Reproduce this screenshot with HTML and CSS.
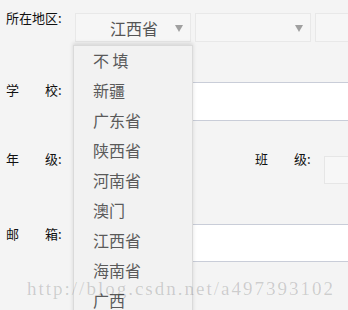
FILE: index.html
```html
<!DOCTYPE html>
<html lang="zh-CN">
<head>
    <meta charset="UTF-8">
    <meta name="viewport" content="width=device-width, initial-scale=1.0">
    <title>所在地区</title>
    <link rel="stylesheet" href="styles.css">
</head>
<body>
    <div class="form">
        <div class="row row-area">
            <label class="label">所在地区:</label>
            <div class="selects">
                <div class="select"><span>江西省</span><i class="arrow"></i></div>
                <div class="select"><span></span><i class="arrow"></i></div>
                <div class="select"><span></span><i class="arrow"></i></div>
            </div>
        </div>
        <div class="row row-school">
            <label class="label">学　　校:</label>
            <div class="input input-tall"></div>
        </div>
        <div class="row row-grade">
            <label class="label">年　　级:</label>
            <div class="spacer"></div>
            <label class="label">班　　级:</label>
            <div class="input input-small"></div>
        </div>
        <div class="row row-mail">
            <label class="label">邮　　箱:</label>
            <div class="input input-mail"></div>
        </div>
    </div>

    <ul class="dropdown">
        <li>不 填</li>
        <li>新疆</li>
        <li>广东省</li>
        <li>陕西省</li>
        <li>河南省</li>
        <li>澳门</li>
        <li>江西省</li>
        <li>海南省</li>
        <li>广西</li>
    </ul>

    <div class="watermark">http://blog.csdn.net/a497393102</div>
</body>
</html>
```

FILE: styles.css
```css
body {
    margin: 0;
    padding: 0 0 0 6px;
    background-color: #f4f4f4;
    font-family: "Noto Sans CJK SC", "Liberation Sans", sans-serif;
    overflow: hidden;
    height: 310px;
    position: relative;
}
.row {
    display: flex;
    align-items: flex-start;
}
.label {
    width: 69px;
    flex: none;
    font-size: 13px;
    line-height: 20px;
    color: #111;
    white-space: pre;
}
.row-area { margin-top: 8px; }
.row-school { margin-top: 38px; }
.row-grade { margin-top: 28px; }
.row-mail { margin-top: 40px; }
.selects {
    display: flex;
    gap: 4px;
    margin-top: 5px;
}
.select {
    width: 116px;
    height: 29px;
    box-sizing: border-box;
    border: 1px solid #e8e8e8;
    background-color: #f6f6f6;
    display: flex;
    align-items: center;
    justify-content: center;
    position: relative;
    font-size: 16px;
    color: #555;
}
.select span {
    margin-left: 2px;
}
.arrow {
    position: absolute;
    right: 7px;
    top: 11px;
    width: 0;
    height: 0;
    border-left: 4px solid transparent;
    border-right: 4px solid transparent;
    border-top: 7px solid #a0a0a0;
}
.input {
    flex: none;
    width: 300px;
    box-sizing: border-box;
    background-color: #fff;
    border-top: 1px solid #c9cdd8;
    border-bottom: 1px solid #c9cdd8;
}
.input-tall {
    height: 39px;
    margin-top: 2px;
}
.input-mail {
    height: 38px;
}
.spacer {
    width: 180px;
    flex: none;
}
.input-small {
    height: 28px;
    margin-top: 7px;
    background-color: #f7f7f7;
    border: 1px solid #e6e6e6;
}
.dropdown {
    position: absolute;
    left: 73px;
    top: 45px;
    width: 120px;
    height: 280px;
    box-sizing: border-box;
    margin: 0;
    padding: 0;
    list-style: none;
    background-color: #f2f2f2;
    border: 1px solid #dadada;
    box-shadow: 0 -2px 4px rgba(0, 0, 0, 0.12);
}
.dropdown li {
    height: 28px;
    line-height: 28px;
    padding: 0 0 2px 19px;
    font-size: 16px;
    color: #5a5a5a;
}
.watermark {
    position: absolute;
    left: 27px;
    top: 277px;
    font-family: "Liberation Serif", serif;
    font-size: 19px;
    line-height: 24px;
    letter-spacing: 2px;
    color: rgba(0, 0, 0, 0.17);
    white-space: nowrap;
    pointer-events: none;
}
```
